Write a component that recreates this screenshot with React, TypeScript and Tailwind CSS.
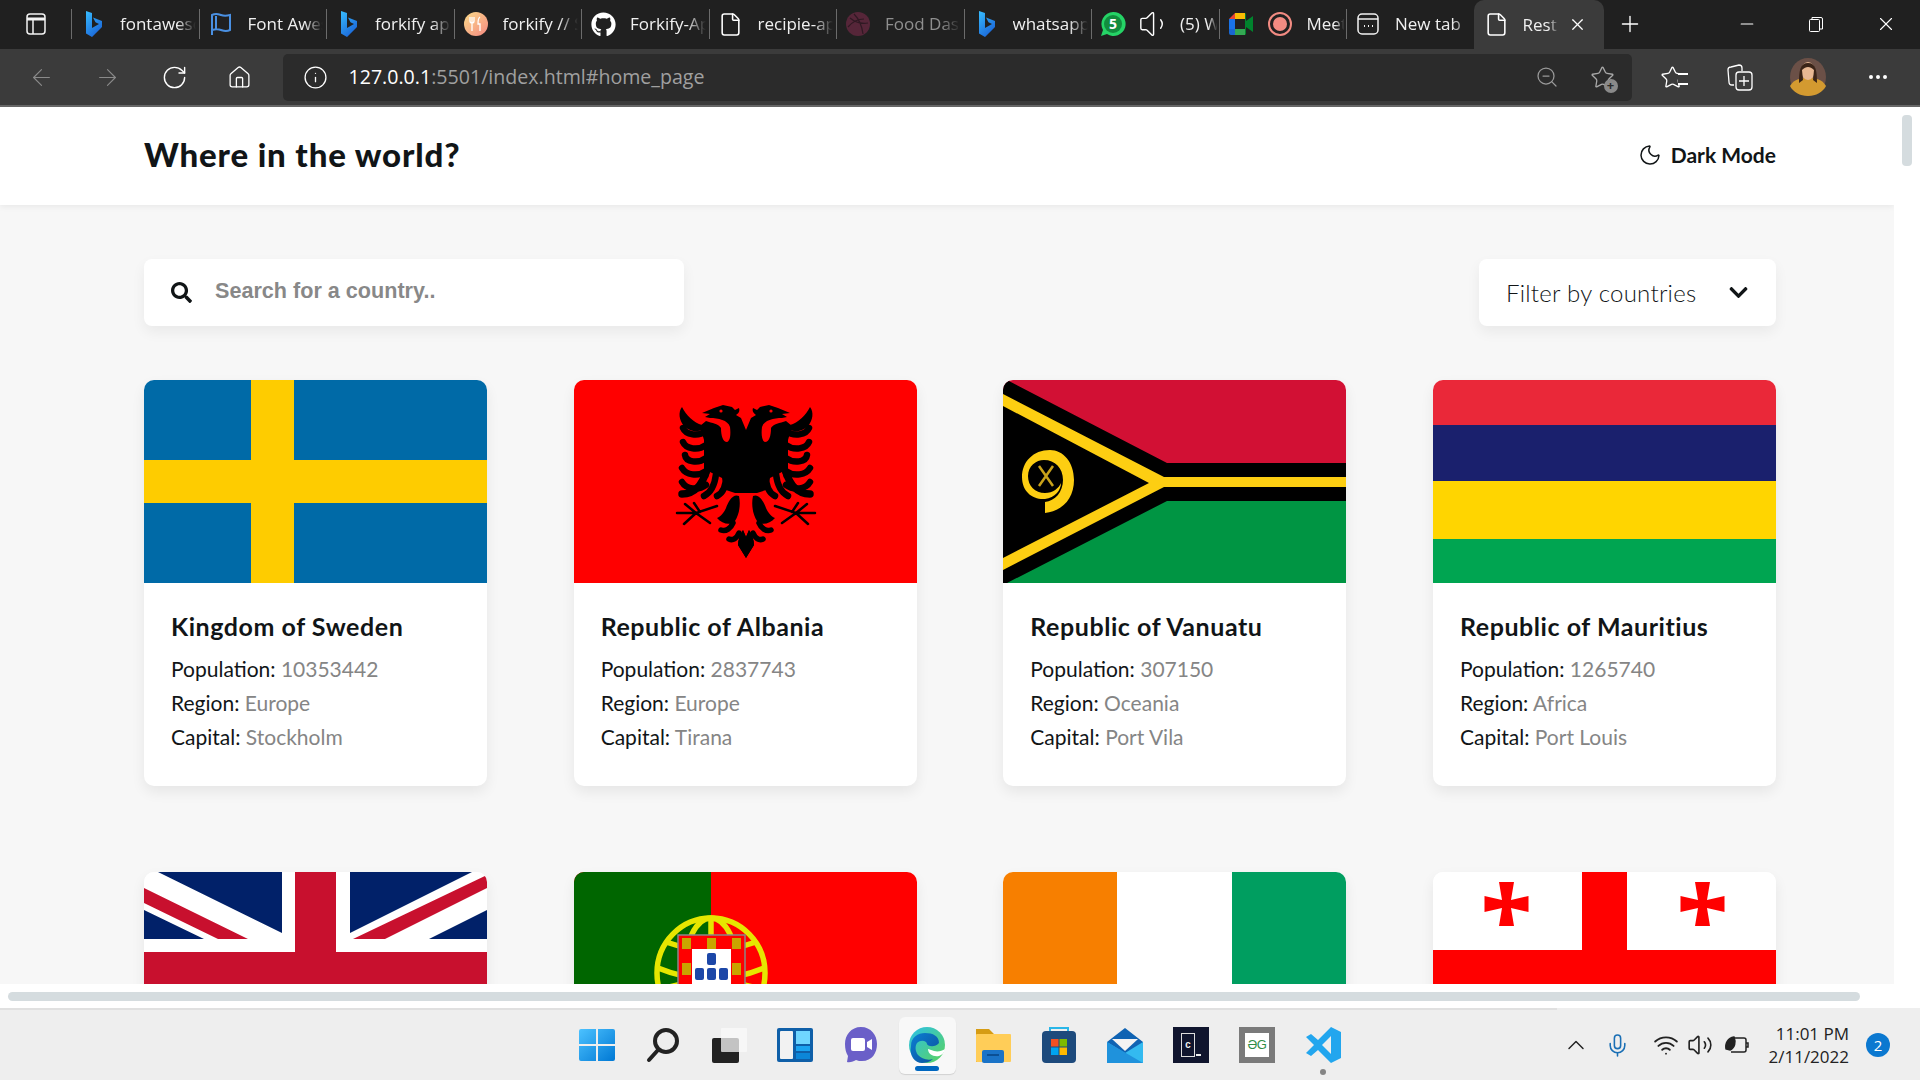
import React from 'react';
import { ArrowLeft, ArrowRight, RotateCw, Home, Info, ZoomOut, Star, Plus, X, Minus, File, Moon, Volume1, Volume2, ChevronUp, Mic, Wifi, MoreHorizontal } from 'lucide-react';
import { FaGithub, FaSearch, FaChevronDown } from 'react-icons/fa';

function Bing() {
  return (
    <svg width="22" height="28" viewBox="0 0 22 28">
      <defs>
        <linearGradient id="bing" x1="0" y1="0" x2="0.6" y2="1">
          <stop offset="0" stopColor="#37bdff" />
          <stop offset="1" stopColor="#1b66d8" />
        </linearGradient>
      </defs>
      <path d="M4 1l6 2v15l7-4-3.500-1.700L11 7.500l9 3.500v6L10 27l-6-3.500z" fill="url(#bing)" />
    </svg>
  );
}

function Tab({ icon, text, extra, dim }: { icon: React.ReactNode; text: string; extra?: React.ReactNode; dim?: boolean }) {
  return (
    <div className="flex h-[48px] w-[127.5px] shrink-0 items-center">
      <div className="h-[30px] w-px shrink-0 bg-[#6b6b6b]" />
      <div className={`flex w-[42px] shrink-0 justify-center ${dim ? 'opacity-60' : ''}`}>{icon}</div>
      {extra}
      <span className={`ml-[6px] flex-1 overflow-hidden whitespace-nowrap [mask-image:linear-gradient(to_right,black_72%,transparent_96%)] ${dim ? 'text-[#8f8f8f]' : 'text-[#f0f0f0]'}`}>
        {text}
      </span>
    </div>
  );
}

function Sweden() {
  return (
    <svg viewBox="0 0 343 203" className="block h-[203px] w-full">
      <rect width="343" height="203" fill="#006aa7" />
      <rect x="107" width="43" height="203" fill="#fecc00" />
      <rect y="80" width="343" height="43" fill="#fecc00" />
    </svg>
  );
}

function EagleHalf() {
  const tips = [
    [66, 48],
    [66, 62],
    [64, 75],
    [67, 88],
    [67, 102],
  ];
  return (
    <g>
      <path d="M0 50L5 38l5-3c-3-2-4-4-3-7l4 2 3-3 9-2 9 3 12 5-8 1 5 3-5 1c-8 0-18 2-20 9-1 8 0 14 3 15 4 0 6-6 6-14 2-4 9-5 15-7l6 5-4 14v38l-4 0-2-6-12 6-4 12-9 3H0z" fill="#000" />
      <path d="M44 45c8-2 16-10 20-18 4 5 3 13-2 19-6 6-14 6-18 4z" fill="#000" />
      <circle cx="25" cy="31" r="1.600" fill="#f00" />
      <g fill="none" stroke="#000" strokeLinecap="round" strokeWidth="6.500">
        {tips.map(([x, y]) => (
          <path key={y} d={`M40 ${y + 3}C48 ${y + 9} 60 ${y + 7} ${x - 3} ${y}`} />
        ))}
        <path d="M20 96c0 9 3 17 9 20" />
        <path d="M30 94c1 9 4 18 12 22" />
        <path d="M40 92c3 10 10 22 24 22" strokeWidth="7.500" />
        <path d="M13 143c2 5 7 9 12 7" strokeWidth="5.500" />
        <path d="M7 153c2 5 6 8 10 6" strokeWidth="5.500" />
      </g>
      <path d="M7 116c6-3 11 6 13 12 2 5 6 9 9 10-5 6-14 8-18 3-4-6-6-16-4-25z" fill="#000" />
      <path d="M0 178l-8-13c0-5 2-10 5-15l3 7 3-7c3 5 5 10 5 15z" fill="#000" />
      <g fill="none" stroke="#000" strokeWidth="2.500" strokeLinecap="round">
        <path d="M29 126l21 7h19M50 133l11-9M50 133l12 11M50 133l-14 10M46 132l6-9" />
      </g>
    </g>
  );
}

function Albania() {
  return (
    <svg viewBox="0 0 343 203" className="block h-[203px] w-full">
      <rect width="343" height="203" fill="#f00" />
      <g transform="translate(172 0)">
        <EagleHalf />
        <g transform="scale(-1 1)">
          <EagleHalf />
        </g>
      </g>
    </svg>
  );
}

function Vanuatu() {
  return (
    <svg viewBox="0 0 343 203" className="block h-[203px] w-full">
      <rect width="343" height="102" fill="#d21034" />
      <rect y="102" width="343" height="101" fill="#009543" />
      <path d="M0 0h4l160 83h179v38H164L4 203H0z" fill="#000" />
      <path d="M0 14l161 83h182v10H161L0 190v-12l146-75L0 26z" fill="#fdce12" />
      <path d="M42 133c18-2 29-15 29-33 0-18-11-30-24-30-17 0-28 12-28 27s11 23 23 22c10-1 16-9 16-16-2 5-8 10-16 10-10 0-17-7-17-17s8-16 16-16c11 0 19 8 19 20s-8 21-18 22z" fill="#fdce12" />
      <path d="M36 86l14 20M50 86l-14 20" stroke="#c9a21a" strokeWidth="2.500" />
    </svg>
  );
}

function Mauritius() {
  return (
    <svg viewBox="0 0 343 203" className="block h-[203px] w-full">
      <rect width="343" height="45" fill="#ea2839" />
      <rect y="45" width="343" height="57" fill="#1a206d" />
      <rect y="101" width="343" height="58" fill="#ffd500" />
      <rect y="159" width="343" height="44" fill="#00a551" />
    </svg>
  );
}

function UnitedKingdom() {
  return (
    <svg viewBox="0 0 343 203" className="block h-[203px] w-full">
      <rect width="343" height="203" fill="#fff" />
      <path d="M14 0h124v61zM0 38l60 29H0zM206 0h122L206 61zM343 38v29h-58z" fill="#012169" />
      <path d="M0 16l104 51H74L0 31zM209 67L343 3v13L241 67z" fill="#c8102e" />
      <rect x="151" width="41" height="203" fill="#c8102e" />
      <rect y="80" width="343" height="42" fill="#c8102e" />
    </svg>
  );
}

function Portugal() {
  return (
    <svg viewBox="0 0 343 203" className="block h-[203px] w-full">
      <rect width="343" height="203" fill="#f00" />
      <rect width="137" height="203" fill="#060" />
      <g fill="none" stroke="#e6e600" strokeWidth="5.500">
        <ellipse cx="137" cy="101" rx="54" ry="55" />
        <ellipse cx="137" cy="101" rx="27" ry="55" />
        <path d="M137 46v110M84 96q53 22 106 0M86 118q51-18 102 0M92 70q45 16 90 0" />
      </g>
      <path d="M104 63h67v80q0 14-33 14t-34-14z" fill="#f00" stroke="#888" strokeWidth="1.500" />
      <path d="M118 77h39v60q0 9-20 9t-19-9z" fill="#fff" />
      <g fill="#c9a400">
        <rect x="108" y="66" width="9" height="11" />
        <rect x="133" y="66" width="9" height="11" />
        <rect x="158" y="66" width="9" height="11" />
        <rect x="108" y="91" width="9" height="12" />
        <rect x="158" y="91" width="9" height="12" />
      </g>
      <g fill="#1c47a8">
        <rect x="133" y="81" width="9" height="12" rx="2" />
        <rect x="121" y="96" width="9" height="12" rx="2" />
        <rect x="133" y="96" width="9" height="12" rx="2" />
        <rect x="145" y="96" width="9" height="12" rx="2" />
      </g>
    </svg>
  );
}

function IvoryCoast() {
  return (
    <svg viewBox="0 0 343 203" className="block h-[203px] w-full">
      <rect width="343" height="203" fill="#fff" />
      <rect width="114" height="203" fill="#f77f00" />
      <rect x="229" width="114" height="203" fill="#009e60" />
    </svg>
  );
}

function Bolnisi({ x, y }: { x: number; y: number }) {
  return (
    <path
      transform={`translate(${x} ${y})`}
      d="M-4.500-4L-7.500-22H7.500L4.500-4 22-8V8L4.500 4 7.500 22H-7.500L-4.500 4-22 8V-8z"
      fill="#f00"
    />
  );
}

function Georgia() {
  return (
    <svg viewBox="0 0 343 203" className="block h-[203px] w-full">
      <rect width="343" height="203" fill="#fff" />
      <rect x="149" width="45" height="203" fill="#f00" />
      <rect y="78" width="343" height="47" fill="#f00" />
      <Bolnisi x={73.5} y={32} />
      <Bolnisi x={269.5} y={32} />
    </svg>
  );
}

const countries = [
  { name: 'Kingdom of Sweden', population: '10353442', region: 'Europe', capital: 'Stockholm', Flag: Sweden },
  { name: 'Republic of Albania', population: '2837743', region: 'Europe', capital: 'Tirana', Flag: Albania },
  { name: 'Republic of Vanuatu', population: '307150', region: 'Oceania', capital: 'Port Vila', Flag: Vanuatu },
  { name: 'Republic of Mauritius', population: '1265740', region: 'Africa', capital: 'Port Louis', Flag: Mauritius },
  { name: 'United Kingdom', population: '67215293', region: 'Europe', capital: 'London', Flag: UnitedKingdom },
  { name: 'Portuguese Republic', population: '10305564', region: 'Europe', capital: 'Lisbon', Flag: Portugal },
  { name: "Republic of Côte d'Ivoire", population: '26378275', region: 'Africa', capital: 'Yamoussoukro', Flag: IvoryCoast },
  { name: 'Georgia', population: '3714000', region: 'Asia', capital: 'Tbilisi', Flag: Georgia },
];

function CountryCard({ country }: { country: (typeof countries)[number] }) {
  const { Flag } = country;
  return (
    <div className="h-[406px] overflow-hidden rounded-[10px] bg-white shadow-[0_6px_14px_rgba(0,0,0,0.07)]">
      <Flag />
      <div className="px-[27px] pt-[26px]">
        <h2 className="mb-[9px] text-[25px] leading-[34px] font-bold tracking-[0.55px] text-[#111517]">{country.name}</h2>
        <p className="text-[21px] leading-[34px] text-[#111517]">Population: <span className="text-[#858585]">{country.population}</span></p>
        <p className="text-[21px] leading-[34px] text-[#111517]">Region: <span className="text-[#858585]">{country.region}</span></p>
        <p className="text-[21px] leading-[34px] text-[#111517]">Capital: <span className="text-[#858585]">{country.capital}</span></p>
      </div>
    </div>
  );
}

function Windows() {
  return (
    <svg width="36" height="36" viewBox="0 0 36 36">
      <defs>
        <linearGradient id="win" x1="0" y1="0" x2="1" y2="1">
          <stop offset="0" stopColor="#4cc2ff" />
          <stop offset="1" stopColor="#0078d4" />
        </linearGradient>
      </defs>
      <path d="M2 2h15v15H0V4q0-2 2-2zM19 2h15q2 0 2 2v13H19zM0 19h17v15H2q-2 0-2-2zM19 19h17v13q0 2-2 2H19z" fill="url(#win)" />
    </svg>
  );
}

function SearchGlass() {
  return (
    <svg width="36" height="36" viewBox="0 0 36 36" fill="none" stroke="#222" strokeWidth="4" strokeLinecap="round">
      <circle cx="21" cy="14" r="11" />
      <path d="M13 23l-9 10" />
    </svg>
  );
}

function TaskView() {
  return (
    <svg width="36" height="36" viewBox="0 0 36 36">
      <rect x="1" y="11" width="27" height="25" rx="2" fill="#222" />
      <rect x="10" y="1" width="26" height="24" rx="1" fill="#fafafa" fillOpacity="0.75" />
    </svg>
  );
}

function Widgets() {
  return (
    <svg width="36" height="36" viewBox="0 0 36 36">
      <rect width="36" height="34" y="1" rx="2" fill="#0f5fa8" />
      <rect x="3" y="4" width="13" height="28" rx="1" fill="#f2f2f2" />
      <rect x="19" y="4" width="14" height="13" fill="#6fd6ff" />
      <rect x="19" y="19" width="14" height="5" fill="#1aa3f0" />
      <rect x="19" y="26" width="14" height="6" fill="#0c86d8" />
    </svg>
  );
}

function Chat() {
  return (
    <svg width="36" height="38" viewBox="0 0 36 38">
      <path d="M18 1C8 1 2 9 2 18c0 5 1 9 3 12l-1 6c3 1 7-1 9-2 2 1 4 1 6 1 10 0 15-8 15-17S28 1 18 1z" fill="#6a5fc8" />
      <rect x="8" y="12" width="14" height="13" rx="2" fill="#fff" />
      <path d="M24 16l5-3v11l-5-3z" fill="#fff" />
    </svg>
  );
}

function Edge() {
  return (
    <svg width="38" height="38" viewBox="0 0 38 38">
      <defs>
        <linearGradient id="edge1" x1="0" y1="0" x2="1" y2="1">
          <stop offset="0" stopColor="#2cc0e8" />
          <stop offset="1" stopColor="#5bd35d" />
        </linearGradient>
        <linearGradient id="edge2" x1="0" y1="0" x2="1" y2="1">
          <stop offset="0" stopColor="#0c7fd3" />
          <stop offset="1" stopColor="#0b4f9a" />
        </linearGradient>
      </defs>
      <circle cx="19" cy="19" r="18" fill="url(#edge1)" />
      <path d="M3 20C3 11 10 7 17 7c8 0 14 3 14 10-4 5-12 3-12 1 0-3-6-5-10-1-2 3-2 8 1 12 3 3 9 6 15 4-3 3-8 4-11 4C7 37 1 30 3 20z" fill="url(#edge2)" />
      <path d="M20 23c0 5 5 8 11 7 3-1 5-3 6-7-3 2-7 3-11 2-3-1-5-2-6-2z" fill="#fff" />
    </svg>
  );
}

function Folder() {
  return (
    <svg width="36" height="36" viewBox="0 0 36 36">
      <path d="M1 2h13l5 5h16v28H1z" fill="#d69c14" />
      <rect x="1" y="7" width="35" height="28" rx="1" fill="#ffcd58" />
      <rect x="7" y="23" width="22" height="13" rx="2" fill="#1a73c7" />
      <rect x="12" y="27" width="12" height="2" fill="#0b4f94" />
    </svg>
  );
}

function Store() {
  return (
    <svg width="36" height="38" viewBox="0 0 36 38">
      <path d="M9 6V2h18v4" fill="none" stroke="#29b6e8" strokeWidth="2" />
      <rect x="1" y="5" width="34" height="32" rx="4" fill="#1d4a7c" />
      <rect x="10" y="13" width="7.500" height="7.500" fill="#f25022" />
      <rect x="18.500" y="13" width="7.500" height="7.500" fill="#7fba00" />
      <rect x="10" y="21.500" width="7.500" height="7.500" fill="#00a4ef" />
      <rect x="18.500" y="21.500" width="7.500" height="7.500" fill="#ffb900" />
    </svg>
  );
}

function Mail() {
  return (
    <svg width="36" height="36" viewBox="0 0 36 36">
      <path d="M18 1L0 15v21h36V15z" fill="#0f63b3" />
      <path d="M5 12h26l-13 12z" fill="#f3f3f3" />
      <path d="M0 15l18 11 18-11v21H0z" fill="#33baf0" />
      <path d="M0 15l36 21H0z" fill="#1f92dc" />
    </svg>
  );
}

function Terminal() {
  return (
    <div className="flex h-[36px] w-[36px] items-center justify-center bg-[#10152e]">
      <div className="flex h-[24px] w-[14px] items-center justify-center border border-[#dddddd] font-['Liberation_Mono',monospace] text-[10px] font-bold text-[#eeeeee]">c</div>
      <div className="ml-[1px] mt-[20px] h-[2px] w-[5px] bg-[#eeeeee]" />
    </div>
  );
}

function Gfg() {
  return (
    <div className="flex h-[36px] w-[36px] items-center justify-center bg-[#7a7a7a]">
      <div className="flex h-[24px] w-[24px] items-center justify-center overflow-hidden bg-white font-['Liberation_Sans',sans-serif] text-[13px] tracking-[-0.5px] text-[#2f8d46]">ƏG</div>
    </div>
  );
}

function VsCode() {
  return (
    <svg width="36" height="36" viewBox="0 0 36 36">
      <path d="M26 0l10 5v26l-10 5-13-13-7 6-5-3 8-8-8-8 5-3 7 6z" fill="#22a6ee" />
      <path d="M26 9v18l-9-9z" fill="#eeeeee" />
    </svg>
  );
}

const taskbarIcons = [
  { id: 'start', icon: <Windows /> },
  { id: 'search', icon: <SearchGlass /> },
  { id: 'tasks', icon: <TaskView /> },
  { id: 'widgets', icon: <Widgets /> },
  { id: 'chat', icon: <Chat /> },
  { id: 'edge', icon: <Edge />, active: true },
  { id: 'folder', icon: <Folder /> },
  { id: 'store', icon: <Store /> },
  { id: 'mail', icon: <Mail /> },
  { id: 'terminal', icon: <Terminal /> },
  { id: 'gfg', icon: <Gfg /> },
  { id: 'code', icon: <VsCode />, dot: true },
];

export default function App() {
  return (
    <div className="flex h-screen w-[1920px] flex-col overflow-hidden bg-white">
      {/* browser tabs */}
      <div className="flex h-[49px] shrink-0 items-start bg-[#202020] font-['Open_Sans',sans-serif] text-[17px]">
        <div className="flex h-[48px] w-[71px] shrink-0 items-center pl-[26px]">
          <svg width="20" height="22" viewBox="0 0 20 22" fill="none" stroke="#f2f2f2" strokeWidth="1.500">
            <rect x="1" y="1" width="18" height="20" rx="3" />
            <path d="M1 6h18" strokeWidth="3" />
            <path d="M7 6v15" />
          </svg>
        </div>
        <Tab icon={<Bing />} text="fontawesome" />
        <Tab
          icon={
            <svg width="22" height="24" viewBox="0 0 22 24" fill="none" stroke="#4a90e2" strokeWidth="2">
              <path d="M2 23V3c4-2 6-1 9 0s5 1 9 0v15c-4 2-6 1-9 0s-5-1-9 0M6 4v14" />
            </svg>
          }
          text="Font Awesome"
        />
        <Tab icon={<Bing />} text="forkify api" />
        <Tab
          icon={
            <svg width="24" height="24" viewBox="0 0 24 24">
              <defs>
                <linearGradient id="fork" x1="0" y1="0" x2="1" y2="1">
                  <stop offset="0" stopColor="#fbdb89" />
                  <stop offset="1" stopColor="#f48982" />
                </linearGradient>
              </defs>
              <circle cx="12" cy="12" r="12" fill="url(#fork)" />
              <path d="M8 5v6m-2-6v4q0 2 2 2t2-2V5M8 11v8M16 5c-2 1-2 5-2 7h2v7" fill="none" stroke="#fff" strokeWidth="1.300" />
            </svg>
          }
          text="forkify // Se"
        />
        <Tab icon={<FaGithub size={25} className="text-white" />} text="Forkify-Api" />
        <Tab icon={<File size={25} strokeWidth={1.5} className="text-white" />} text="recipie-api" />
        <Tab
          dim
          icon={
            <svg width="24" height="24" viewBox="0 0 24 24" fill="none" stroke="#3a1525" strokeWidth="1.200">
              <circle cx="12" cy="12" r="12" fill="#7a2a4a" stroke="none" />
              <path d="M4 6c6 5 12 6 18 5M8 2c5 5 8 12 9 20M2 15c5-6 11-8 16-8" />
            </svg>
          }
          text="Food Dash"
        />
        <Tab icon={<Bing />} text="whatsapp" />
        <Tab
          icon={
            <svg width="26" height="26" viewBox="0 0 26 26">
              <path d="M13 1a12 12 0 00-10 18L1 25l6-2A12 12 0 1013 1z" fill="#25d366" />
              <circle cx="13" cy="13" r="9" fill="#128c3e" />
              <text x="13" y="18" textAnchor="middle" fontSize="14" fontWeight="700" fill="#fff" fontFamily="Open Sans">5</text>
            </svg>
          }
          extra={<Volume1 size={34} strokeWidth={1} className="ml-[4px] mr-[2px] shrink-0 text-white" />}
          text="(5) WhatsApp"
        />
        <Tab
          icon={
            <svg width="24" height="22" viewBox="0 0 24 22">
              <path d="M0 6l6-6v6z" fill="#ea4335" />
              <path d="M6 0h10v6H6z" fill="#fbbc04" />
              <path d="M0 6h6v10H0z" fill="#1a73e8" />
              <path d="M0 16h6v6H2q-2 0-2-2z" fill="#1967d2" />
              <path d="M6 16h10v6H6z" fill="#34a853" />
              <path d="M16 0v22l1-1V1zM17 8l7-5v16l-7-5z" fill="#00832d" />
              <rect x="6" y="6" width="10" height="10" fill="#202020" />
            </svg>
          }
          extra={
            <div className="ml-[6px] mr-[9px] flex h-[24px] w-[24px] shrink-0 items-center justify-center rounded-full border-2 border-[#f28b82]">
              <div className="h-[14px] w-[14px] rounded-full bg-[#f28b82]" />
            </div>
          }
          text="Meet"
        />
        <Tab
          icon={
            <svg width="22" height="22" viewBox="0 0 22 22" fill="none" stroke="#f2f2f2" strokeWidth="1.500">
              <rect x="1" y="1" width="20" height="20" rx="4" />
              <path d="M1 6h20" />
              <path d="M7 13h1M11 13h1M15 13h1" strokeWidth="2" />
            </svg>
          }
          text="New tab"
        />
        <div className="flex h-[49px] w-[130px] shrink-0 items-center rounded-t-[10px] bg-[#3b3b3b] pl-[10px] text-[#f0f0f0]">
          <File size={25} strokeWidth={1.5} className="shrink-0 text-white" />
          <span className="ml-[14px] w-[36px] overflow-hidden whitespace-nowrap [mask-image:linear-gradient(to_right,black_70%,transparent)]">Rest Countries</span>
          <X size={19} strokeWidth={1.5} className="ml-[9px] text-white" />
        </div>
        <div className="flex h-[48px] w-[52px] items-center justify-center">
          <Plus size={26} strokeWidth={1.25} className="text-white" />
        </div>
        <div className="ml-auto flex h-[48px] items-center">
          <Minus size={20} strokeWidth={1.25} className="mr-[51px] text-white" />
          <svg width="16" height="16" viewBox="0 0 16 16" fill="none" stroke="#fff" strokeWidth="1" className="mr-[51px]">
            <rect x="1.500" y="3.500" width="10" height="12" rx="1" />
            <path d="M4 3V1.500h9q1.500 0 1.500 1.500v10H12" />
          </svg>
          <X size={22} strokeWidth={1.25} className="mr-[23px] text-white" />
        </div>
      </div>

      {/* toolbar */}
      <div className="flex h-[56px] shrink-0 items-center bg-[#3b3b3b] text-white">
        <ArrowLeft size={27} strokeWidth={1} className="ml-[28px] text-[#8a8a8a]" />
        <ArrowRight size={27} strokeWidth={1} className="ml-[39px] text-[#8a8a8a]" />
        <RotateCw size={27} strokeWidth={1.25} className="ml-[39.5px]" />
        <Home size={25} strokeWidth={1.25} className="ml-[39px]" />
        <div className="ml-[31.5px] flex h-[47px] w-[1349px] items-center rounded-[5px] bg-[#2b2b2b] pl-[19.5px]">
          <Info size={25} strokeWidth={1.25} />
          <span className="ml-[21px] font-['Open_Sans',sans-serif] text-[19.6px]">
            127.0.0.1<span className="text-[#a0a0a0]">:5501/index.html#home_page</span>
          </span>
          <ZoomOut size={24} strokeWidth={1.25} className="ml-auto text-[#9a9a9a]" />
          <div className="relative ml-[30.5px] mr-[17.5px]">
            <Star size={25} strokeWidth={1.25} className="text-[#a8a8a8]" />
            <div className="absolute -bottom-[3px] -right-[3px] flex h-[14px] w-[14px] items-center justify-center rounded-full bg-[#8a8a8a] text-[13px] leading-none font-bold text-[#2b2b2b]">+</div>
          </div>
        </div>
        <div className="relative ml-[28px]">
          <Star size={25} strokeWidth={1.25} />
          <div className="absolute right-[-3px] top-[8px] h-[12px] w-[10px] border-y-2 border-white bg-[#3b3b3b]" />
        </div>
        <svg width="26" height="28" viewBox="0 0 26 28" fill="none" stroke="#fff" strokeWidth="1.300" className="ml-[42px]">
          <path d="M7 22H5q-3 0-3-3L1 7q0-3 3-3l8-2q3 0 3 3v3" />
          <rect x="9" y="9" width="16" height="18" rx="3" />
          <path d="M17 13v10M12 18h10" />
        </svg>
        <svg width="36" height="38" viewBox="0 0 36 38" className="ml-[37px]">
          <ellipse cx="18" cy="19" rx="18" ry="19" fill="#6b5047" />
          <path d="M0 28c4-7 10-8 18-8s14 1 18 8c-3 6-10 10-18 10S3 34 0 28z" fill="#d39a30" />
          <ellipse cx="18" cy="13" rx="7" ry="9" fill="#e8b894" />
          <path d="M9 25c0-12 1-20 9-20s9 8 9 20l-4-3 1-10c-2-2-4-3-6-3s-4 1-6 3l1 10z" fill="#3a2418" />
        </svg>
        <MoreHorizontal size={24} strokeWidth={2} className="ml-[40px]" />
      </div>
      <div className="h-[2px] shrink-0 bg-[#666666]" />

      {/* page */}
      <div className="flex h-[877px] shrink-0">
        <main className="h-full w-[1894px] shrink-0 overflow-hidden bg-[#f7f7f7] font-['Lato',sans-serif]">
          <header className="flex h-[98px] items-center justify-between bg-white pl-[144px] pr-[118px] shadow-[0_2px_6px_rgba(0,0,0,0.06)]">
            <h1 className="-mt-[2px] text-[33px] font-black tracking-[0.85px] text-[#111517]">Where in the world?</h1>
            <div className="-mt-[2px] flex items-center text-[21px] font-bold text-[#111517]">
              <Moon size={24} strokeWidth={1.5} className="mr-[9px]" />
              Dark Mode
            </div>
          </header>
          <section className="pl-[144px] pr-[118px] pt-[54px]">
            <div className="flex h-[67px] items-center justify-between">
              <div className="flex h-full w-[540px] items-center rounded-[8px] bg-white pl-[27px] shadow-[0_6px_14px_rgba(0,0,0,0.06)]">
                <FaSearch size={21} className="shrink-0 text-[#111517]" />
                <input
                  placeholder="Search for a country.."
                  className="-mt-[3px] ml-[23px] w-[400px] bg-transparent font-['Liberation_Sans',sans-serif] text-[21.6px] font-bold outline-none placeholder:text-[#888888]"
                />
              </div>
              <div className="flex h-full w-[297px] items-center rounded-[8px] bg-white pl-[27px] shadow-[0_6px_14px_rgba(0,0,0,0.06)]">
                <span className="w-[194px] whitespace-nowrap text-[24px] font-light tracking-[0.25px] text-[#111517]">Filter by countries</span>
                <FaChevronDown size={21} className="ml-[27.5px] text-[#111517]" />
              </div>
            </div>
            <div className="mt-[54px] grid grid-cols-[repeat(4,343px)] justify-between gap-y-[86px]">
              {countries.map((c) => (
                <CountryCard key={c.name} country={c} />
              ))}
            </div>
          </section>
        </main>
        <div className="flex-1 pl-[8px] pt-[8px]">
          <div className="h-[51px] w-[10px] rounded-[4px] bg-[#d5dcdf]" />
        </div>
      </div>

      {/* horizontal scrollbar */}
      <div className="h-[24px] shrink-0 pl-[8px] pt-[8px]">
        <div className="h-[9px] w-[1852px] rounded-full bg-[#d5dcdf]" />
      </div>

      {/* windows taskbar */}
      <div className="h-[2px] shrink-0 bg-[#eeeeee]">
        <div className="h-[2px] w-[1557px] bg-[#e0e0e0]" />
      </div>
      <div className="grid h-[70px] shrink-0 grid-cols-[1fr_auto_1fr] bg-[#eeeeee] font-['Open_Sans',sans-serif]">
        <div />
        <div className="flex">
          {taskbarIcons.map((item) => (
            <div key={item.id} className="relative flex h-[70px] w-[66px] items-center justify-center">
              {item.active && (
                <>
                  <div className="absolute left-[5px] top-[7px] h-[57px] w-[57px] rounded-[6px] bg-[#f8f8f8] shadow-[0_1px_1px_rgba(0,0,0,0.12)]" />
                  <div className="absolute bottom-[9px] left-[21px] h-[5px] w-[24px] rounded-full bg-[#0067c0]" />
                </>
              )}
              <div className="relative">{item.icon}</div>
              {item.dot && <div className="absolute bottom-[5px] left-[30px] h-[6px] w-[6px] rounded-full bg-[#858585]" />}
            </div>
          ))}
        </div>
        <div className="flex items-center justify-end pr-[30px]">
          <ChevronUp size={28} strokeWidth={1.25} className="text-[#222222]" />
          <Mic size={25} strokeWidth={1.5} className="ml-[15px] text-[#1a6fb5]" />
          <Wifi size={26} strokeWidth={1.75} className="ml-[23px] text-[#222222]" />
          <Volume2 size={26} strokeWidth={1.5} className="ml-[8px] text-[#222222]" />
          <svg width="26" height="20" viewBox="0 0 24 20" fill="none" stroke="#222" strokeWidth="1.500" className="ml-[11px]">
            <path d="M6 3h13q2 0 2 2v10q0 2-2 2H6" />
            <path d="M21 8h2v4h-2" />
            <path d="M1 14C0 8 3 3 9 2c2 5 1 11-4 13z" fill="#222" />
          </svg>
          <div className="ml-[18px] text-right text-[17px] leading-[23px] text-[#222222]">
            <div>11:01 PM</div>
            <div>2/11/2022</div>
          </div>
          <div className="ml-[17px] flex h-[24px] w-[24px] items-center justify-center rounded-full bg-[#0b78d0] text-[15px] text-white">2</div>
        </div>
      </div>
    </div>
  );
}
